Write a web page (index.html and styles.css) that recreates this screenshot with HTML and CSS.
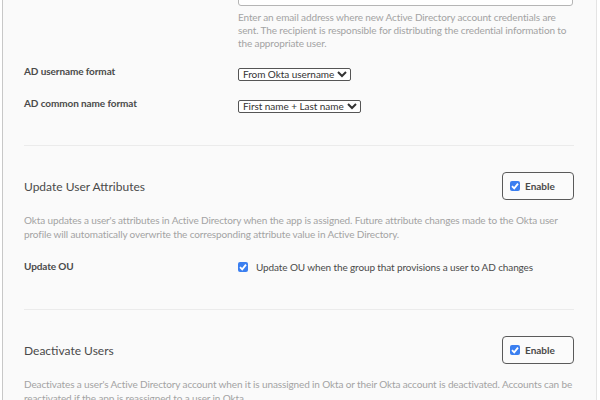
FILE: index.html
```html
<!DOCTYPE html>
<html>
<head>
<meta charset="utf-8">
<link rel="stylesheet" href="styles.css">
</head>
<body>
<div class="page">
  <div class="panel">
    <div class="row row-email">
      <div class="label"></div>
      <div class="field">
        <input class="text-input" type="text">
        <p class="help">Enter an email address where new Active Directory account credentials are sent. The recipient is responsible for distributing the credential information to the appropriate user.</p>
      </div>
    </div>
    <div class="row row-select">
      <div class="label">AD username format</div>
      <div class="field"><span class="select">From Okta username<svg class="chev" viewBox="0 0 10 8" width="10" height="8"><path d="M1 2 L5 6 L9 2" fill="none" stroke="#333" stroke-width="2"/></svg></span></div>
    </div>
    <div class="row row-select">
      <div class="label">AD common name format</div>
      <div class="field"><span class="select">First name + Last name<svg class="chev" viewBox="0 0 10 8" width="10" height="8"><path d="M1 2 L5 6 L9 2" fill="none" stroke="#333" stroke-width="2"/></svg></span></div>
    </div>

    <hr class="sep">

    <div class="section-head">
      <h2 class="title">Update User Attributes</h2>
      <label class="enable"><span class="cb"><svg viewBox="0 0 10 10" width="10" height="10"><path d="M2 5.2 L4.2 7.4 L8 2.6" fill="none" stroke="#fff" stroke-width="1.8"/></svg></span>Enable</label>
    </div>
    <p class="desc">Okta updates a user's attributes in Active Directory when the app is assigned. Future attribute changes made to the Okta user profile will automatically overwrite the corresponding attribute value in Active Directory.</p>
    <div class="row row-check">
      <div class="label">Update OU</div>
      <div class="field check-field"><span class="cb"><svg viewBox="0 0 10 10" width="10" height="10"><path d="M2 5.2 L4.2 7.4 L8 2.6" fill="none" stroke="#fff" stroke-width="1.8"/></svg></span>Update OU when the group that provisions a user to AD changes</div>
    </div>

    <hr class="sep sep-second">

    <div class="section-head second">
      <h2 class="title">Deactivate Users</h2>
      <label class="enable"><span class="cb"><svg viewBox="0 0 10 10" width="10" height="10"><path d="M2 5.2 L4.2 7.4 L8 2.6" fill="none" stroke="#fff" stroke-width="1.8"/></svg></span>Enable</label>
    </div>
    <p class="desc">Deactivates a user's Active Directory account when it is unassigned in Okta or their Okta account is deactivated. Accounts can be reactivated if the app is reassigned to a user in Okta.</p>
  </div>
</div>
</body>
</html>
```
FILE: styles.css
```css
html, body {
  margin: 0;
  padding: 0;
  background: #ffffff;
  overflow: hidden;
}
body {
  font-family: "Lato", "Open Sans", sans-serif;
  color: #4a4a4a;
}
.page {
  width: 600px;
  height: 400px;
  overflow: hidden;
  padding-left: 2px;
  box-sizing: border-box;
}
.panel {
  width: 595px;
  box-sizing: border-box;
  margin-top: -24px;
  border-left: 1px solid #c8c8c8;
  border-right: 1px solid #e4e4e4;
  background: #fafafa;
  padding: 0 22px 40px 21px;
}
.row {
  display: grid;
  grid-template-columns: 214px 1fr;
  align-items: start;
}
.label {
  font-size: 10px;
  line-height: 13px;
  letter-spacing: -0.1px;
  font-weight: 700;
  color: #4a4a4a;
}
.text-input {
  display: block;
  width: 335px;
  height: 30px;
  box-sizing: border-box;
  border: 1px solid #b5b5b5;
  border-radius: 3px;
  background: #fff;
  margin: 0;
}
.help {
  margin: 5px 0 0;
  font-size: 10px;
  letter-spacing: -0.12px;
  line-height: 13px;
  color: #a3a3a3;
  width: 335px;
}
.row-select {
  align-items: center;
}
.row-email + .row-select { margin-top: 12px; }
.row-select + .row-select { margin-top: 13px; }
.select {
  display: inline-flex;
  align-items: center;
  gap: 3px;
  height: 11px;
  padding: 0 3px 0 4px;
  border: 1px solid #555;
  border-radius: 2px;
  background: #fff;
  font-size: 10px;
  letter-spacing: -0.05px;
  color: #333;
}
.chev { flex: none; }
.sep {
  border: 0;
  border-top: 1px solid #ebebeb;
  margin: 32px 0 0;
}
.sep.sep-second { margin-top: 36px; }
.section-head {
  display: flex;
  justify-content: space-between;
  align-items: center;
  margin-top: 26px;
}
.section-head.second { margin-top: 26px; }
.title {
  margin: 0;
  font-size: 12px;
  font-weight: 400;
  color: #4a4a4a;
}
.enable {
  display: flex;
  align-items: center;
  gap: 5px;
  width: 72px;
  height: 28px;
  box-sizing: border-box;
  padding-left: 7px;
  border: 1px solid #5a5a5a;
  border-radius: 4px;
  font-size: 10px;
  font-weight: 700;
  color: #4a4a4a;
  background: #fbfbfb;
}
.cb {
  display: inline-flex;
  align-items: center;
  justify-content: center;
  width: 10px;
  height: 10px;
  border-radius: 2px;
  background: #3b7ff0;
  flex: none;
}
.desc {
  margin: 14px 0 0;
  font-size: 10px;
  letter-spacing: -0.12px;
  line-height: 13.5px;
  color: #a3a3a3;
}
.row-check {
  margin-top: 19px;
  align-items: center;
}
.check-field {
  display: flex;
  align-items: center;
  gap: 8px;
  font-size: 10px;
  letter-spacing: -0.12px;
  color: #4a4a4a;
}
```
